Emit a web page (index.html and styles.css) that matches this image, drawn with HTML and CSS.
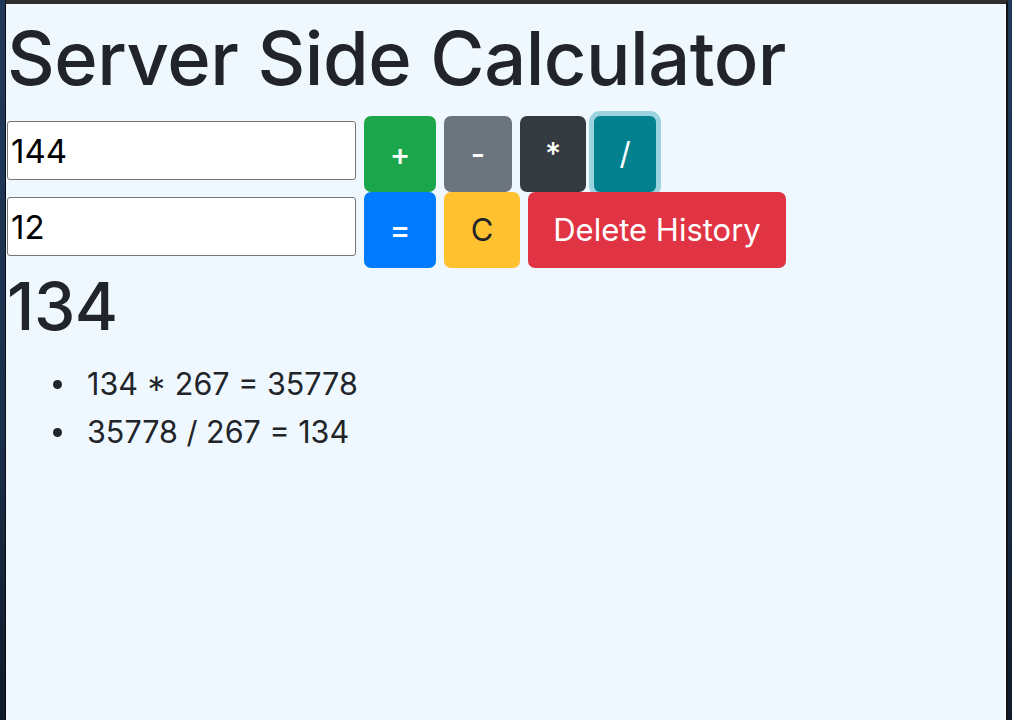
FILE: index.html
```html
<!DOCTYPE html>
<html lang="en">
<head>
<meta charset="utf-8">
<title>Server Side Calculator</title>
<link rel="stylesheet" href="styles.css">
</head>
<body>
<div class="desk">
  <div class="window">
    <main class="app">
      <h1 class="title">Server Side Calculator</h1>
      <div class="calc">
        <div class="calc-row">
          <input class="num" type="text" value="144">
          <button class="btn btn-green">+</button>
          <button class="btn btn-grey">-</button>
          <button class="btn btn-dark">*</button>
          <button class="btn btn-teal btn-focus">/</button>
        </div>
        <div class="calc-row">
          <input class="num" type="text" value="12">
          <button class="btn btn-blue">=</button>
          <button class="btn btn-yellow">C</button>
          <button class="btn btn-red">Delete History</button>
        </div>
      </div>
      <h2 class="result">134</h2>
      <ul class="history">
        <li>134 * 267 = 35778</li>
        <li>35778 / 267 = 134</li>
      </ul>
    </main>
  </div>
</div>
</body>
</html>
```
FILE: styles.css
```css
html, body {
  margin: 0;
  height: 100%;
}
body {
  background: #1b3150;
  font-family: Inter, "Noto Sans", sans-serif;
  color: #212529;
  overflow: hidden;
}
.desk {
  height: 100%;
  display: flex;
  background: linear-gradient(180deg, #213a5c 0%, #1a2f4b 60%, #0f1a2a 100%);
}
.window {
  margin-left: 5px;
  width: 1000px;
  height: 100%;
  background: #f0f8ff;
  border-left: 1px solid #0b0b0b;
  border-right: 2px solid #121212;
  border-top: 4px solid #2e2e2e;
  box-sizing: content-box;
}
.title {
  margin: 0;
  padding-left: 1px;
  font-size: 74px;
  font-weight: 500;
  line-height: 108px;
  letter-spacing: -0.5px;
  height: 112px;
}
.calc {
  display: flex;
  flex-direction: column;
}
.calc-row {
  display: flex;
  align-items: flex-start;
  gap: 8px;
  height: 76px;
}
.num {
  margin: 5px 0 0 1px;
  width: 349px;
  height: 59px;
  box-sizing: border-box;
  border: 1px solid #767676;
  border-radius: 3px;
  background: #fff;
  padding: 0 3px;
  font-family: Inter, "Noto Sans", sans-serif;
  font-size: 33px;
  color: #000;
}
.btn {
  height: 76px;
  padding: 0;
  border: none;
  border-radius: 7px;
  font-family: Inter, "Noto Sans", sans-serif;
  font-size: 31px;
  font-weight: 400;
  color: #fff;
  line-height: 76px;
}
.btn-green { background: #1ba64b; width: 72px; font-weight: 500; }
.btn-grey { background: #6c757d; width: 68px; font-weight: 500; }
.btn-dark { background: #343a40; width: 66px; font-weight: 500; }
.btn-teal { background: #04818f; width: 62px; }
.btn-blue { background: #007bff; width: 72px; font-weight: 500; }
.btn-yellow { background: #ffc12f; color: #212529; width: 76px; }
.btn-red { background: #e03444; width: 258px; }
.btn-focus {
  box-shadow: 0 0 0 5px #9dd3df;
  border-radius: 6px;
}
.result {
  margin: 0;
  padding-left: 1px;
  font-size: 66px;
  font-weight: 500;
  line-height: 76px;
  height: 92px;
  letter-spacing: -0.5px;
}
.history {
  margin: 0;
  padding-left: 81px;
  list-style: none;
  font-size: 30.5px;
  line-height: 48px;
}
.history li {
  display: flex;
  align-items: center;
}
.history li::before {
  content: "";
  width: 9px;
  height: 9px;
  border-radius: 50%;
  background: #212529;
  margin-left: -34px;
  margin-right: 25px;
  flex: none;
}
```
